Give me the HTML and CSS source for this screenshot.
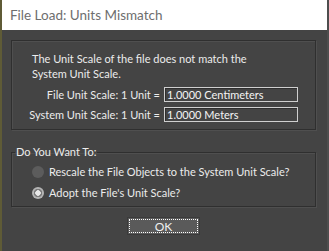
FILE: index.html
```html
<!DOCTYPE html>
<html lang="en">
<head>
    <meta charset="UTF-8">
    <title>File Load: Units Mismatch</title>
    <link rel="stylesheet" href="styles.css">
</head>
<body>
    <div class="titlebar">File Load: Units Mismatch</div>

    <div class="content">
        <!-- Scale info -->
        <div class="group info">
            <p class="message">The Unit Scale of the file does not match the<br>System Unit Scale.</p>
            <div class="scale-row">
                <span class="scale-label">File Unit Scale: 1 Unit =</span>
                <span class="scale-value">1.0000 Centimeters</span>
            </div>
            <div class="scale-row">
                <span class="scale-label">System Unit Scale: 1 Unit =</span>
                <span class="scale-value">1.0000 Meters</span>
            </div>
        </div>

        <!-- Choice -->
        <fieldset class="group choice">
            <legend>Do You Want To:</legend>
            <div class="options">
                <label class="option"><span class="radio"></span>Rescale the File Objects to the System Unit Scale?</label>
                <label class="option"><span class="radio checked"></span>Adopt the File's Unit Scale?</label>
            </div>
        </fieldset>

        <div class="actions">
            <button class="ok-button">OK</button>
        </div>
    </div>
</body>
</html>
```
FILE: styles.css
```css
html, body {
    margin: 0;
    height: 100%;
}
body {
    font-family: Lato, "Liberation Sans", sans-serif;
    font-size: 11px;
    color: #ececec;
    background: #444444;
    border-left: 2px solid #5f5b36;
    border-right: 2px solid #4e4e4e;
    box-sizing: border-box;
}
.titlebar {
    height: 30px;
    line-height: 30px;
    background: #ffffff;
    color: #6e6e6e;
    padding-left: 8px;
    font-size: 13.5px;
}
.content {
    padding: 10px 11px 0 9px;
}
.group {
    border: 1px solid #2f2f2f;
    box-shadow: inset 1px 1px 0 #4f4f4f, 1px 1px 0 #4f4f4f;
    box-sizing: border-box;
    margin: 0;
}
.info {
    height: 90px;
    padding: 10px 17px 0 0;
}
.message {
    margin: 0 0 6px 20px;
    line-height: 15px;
}
.scale-row {
    display: flex;
    justify-content: flex-end;
    align-items: center;
    gap: 4px;
    margin-bottom: 5px;
}
.scale-label {
    white-space: nowrap;
}
.scale-value {
    width: 134px;
    height: 15px;
    line-height: 13px;
    box-sizing: border-box;
    border: 1px solid #cfcfcf;
    box-shadow: inset 1px 1px 0 #2e2e2e;
    padding-left: 2px;
    color: #f4f4f4;
}
.choice {
    margin-top: 15px;
    height: 62px;
    padding: 2px 0 0 3px;
}
.choice legend {
    padding: 0 1px;
    margin-left: 0;
    line-height: 14px;
}
.options {
    padding-left: 17px;
}
.option {
    display: flex;
    align-items: center;
    gap: 5px;
    height: 21px;
    white-space: nowrap;
}
.radio {
    width: 12px;
    height: 12px;
    border-radius: 50%;
    background: #5c5c5c;
    box-sizing: border-box;
}
.radio.checked {
    background: radial-gradient(circle, #e8e8e8 0 2.5px, #7a7a7a 3px 4px, #b4b4b4 4.5px);
}
.actions {
    display: flex;
    justify-content: center;
    padding-top: 10px;
}
.ok-button {
    width: 73px;
    height: 18px;
    padding: 0;
    background: #5a5a5a;
    border: 1px solid #3a3a3a;
    outline: 1px dotted #ffffff;
    outline-offset: -3px;
    color: #f0f0f0;
    font-family: inherit;
    font-size: 12px;
}
```
